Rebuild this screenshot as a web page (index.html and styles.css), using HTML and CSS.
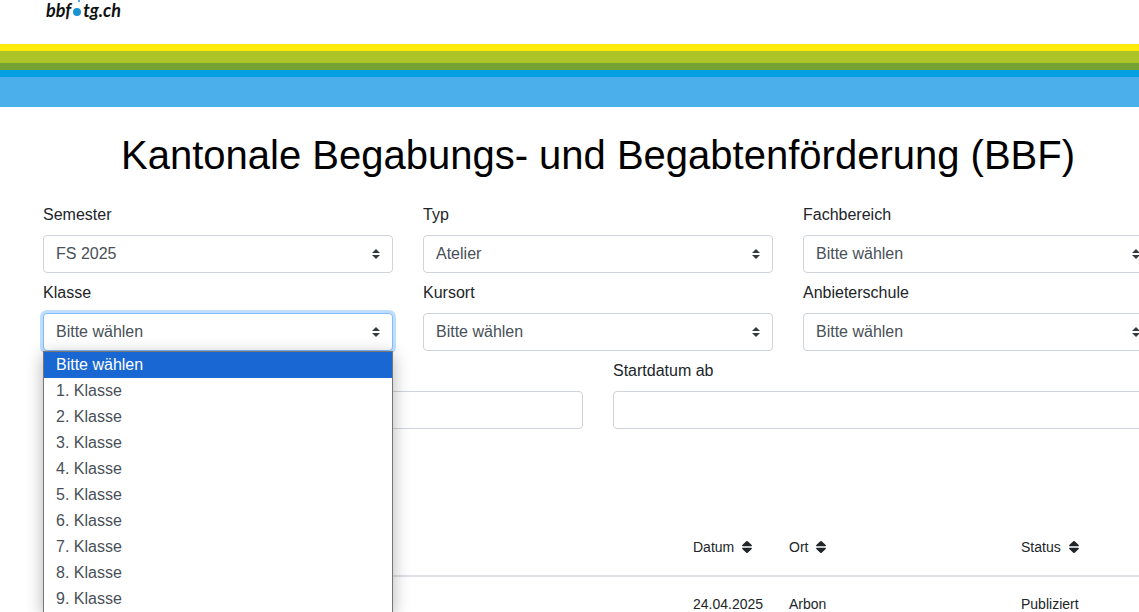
FILE: index.html
```html
<!DOCTYPE html>
<html lang="de">
<head>
<meta charset="utf-8">
<meta name="viewport" content="width=device-width, initial-scale=1">
<title>Kantonale Begabungs- und Begabtenförderung (BBF)</title>
<link rel="stylesheet" href="styles.css">
</head>
<body>
<header class="site-header">
  <a class="logo" href="#" aria-label="bbf tg.ch">
    <span>bbf</span>
    <svg class="logo-dot" viewBox="0 0 10 20" aria-hidden="true"><circle cx="5" cy="12" r="4"/><circle cx="7" cy="1" r="1"/></svg>
    <span>tg.ch</span>
  </a>
</header>
<div class="bands" aria-hidden="true">
  <div class="band band-yellow"></div>
  <div class="band band-lime"></div>
  <div class="band band-green"></div>
  <div class="band band-blue"></div>
  <div class="band band-sky"></div>
</div>
<main class="page">
  <h1 class="title">Kantonale Begabungs- und Begabtenförderung (BBF)</h1>
  <form class="filters">
    <div class="row row-three">
      <div class="field">
        <label for="semester">Semester</label>
        <select class="control select" id="semester"><option>FS 2025</option></select>
      </div>
      <div class="field">
        <label for="typ">Typ</label>
        <select class="control select" id="typ"><option>Atelier</option></select>
      </div>
      <div class="field">
        <label for="fachbereich">Fachbereich</label>
        <select class="control select" id="fachbereich"><option>Bitte wählen</option></select>
      </div>
      <div class="field">
        <label for="klasse">Klasse</label>
        <select class="control select is-open" id="klasse"><option>Bitte wählen</option></select>
        <ul class="menu" role="listbox" aria-label="Klasse">
          <li class="menu-item is-selected" role="option" aria-selected="true">Bitte wählen</li>
          <li class="menu-item" role="option">1. Klasse</li>
          <li class="menu-item" role="option">2. Klasse</li>
          <li class="menu-item" role="option">3. Klasse</li>
          <li class="menu-item" role="option">4. Klasse</li>
          <li class="menu-item" role="option">5. Klasse</li>
          <li class="menu-item" role="option">6. Klasse</li>
          <li class="menu-item" role="option">7. Klasse</li>
          <li class="menu-item" role="option">8. Klasse</li>
          <li class="menu-item" role="option">9. Klasse</li>
        </ul>
      </div>
      <div class="field">
        <label for="kursort">Kursort</label>
        <select class="control select" id="kursort"><option>Bitte wählen</option></select>
      </div>
      <div class="field">
        <label for="anbieter">Anbieterschule</label>
        <select class="control select" id="anbieter"><option>Bitte wählen</option></select>
      </div>
    </div>
    <div class="row row-two">
      <div class="field">
        <input class="control" type="text" aria-label="Suche">
      </div>
      <div class="field">
        <label for="start">Startdatum ab</label>
        <input class="control" id="start" type="text">
      </div>
    </div>
  </form>
  <table class="courses">
    <colgroup><col><col class="col-date"><col class="col-place"><col class="col-status"></colgroup>
    <thead>
      <tr>
        <td></td>
        <th scope="col"><button class="sort" type="button">Datum <svg class="sort-icon" viewBox="0 0 10 12" aria-hidden="true"><path d="M4.300.3Q5-.3 5.700.3L9.700 4Q10.200 5.300 9.200 5.300H.8Q-.2 5.300.3 4ZM4.300 11.700Q5 12.300 5.700 11.700L9.700 8Q10.200 6.700 9.200 6.700H.8Q-.2 6.700.3 8Z"/></svg></button></th>
        <th scope="col"><button class="sort" type="button">Ort <svg class="sort-icon" viewBox="0 0 10 12" aria-hidden="true"><path d="M4.300.3Q5-.3 5.700.3L9.700 4Q10.200 5.300 9.200 5.300H.8Q-.2 5.300.3 4ZM4.300 11.700Q5 12.300 5.700 11.700L9.700 8Q10.200 6.700 9.200 6.700H.8Q-.2 6.700.3 8Z"/></svg></button></th>
        <th scope="col"><button class="sort" type="button">Status <svg class="sort-icon" viewBox="0 0 10 12" aria-hidden="true"><path d="M4.300.3Q5-.3 5.700.3L9.700 4Q10.200 5.300 9.200 5.300H.8Q-.2 5.300.3 4ZM4.300 11.700Q5 12.300 5.700 11.700L9.700 8Q10.200 6.700 9.200 6.700H.8Q-.2 6.700.3 8Z"/></svg></button></th>
      </tr>
    </thead>
    <tbody>
      <tr><td></td><td>24.04.2025</td><td>Arbon</td><td>Publiziert</td></tr>
    </tbody>
  </table>
</main>
</body>
</html>
```

FILE: styles.css
```css
*, *::before, *::after { box-sizing: border-box; }

body {
  margin: 0;
  height: 100vh;
  overflow: hidden;
  background: #fff;
  color: #212529;
  font: 16px/24px "Liberation Sans", Arial, sans-serif;
}

.site-header { height: 44px; padding-left: 46px; }

.logo {
  display: inline-flex;
  gap: 1px;
  color: #111;
  font: italic 700 18px/20px Lato, sans-serif;
  text-decoration: none;
}
.logo-dot { width: 10px; height: 20px; fill: #1b93cf; }

.band-yellow { height: 7px; background: #ffeb0a; }
.band-lime { height: 12px; background: #adc428; }
.band-green { height: 7px; background: #74a333; }
.band-blue { height: 7px; background: #00a0e3; }
.band-sky { height: 30px; background: #4aafea; }

/* The content column runs slightly past the right window edge. */
.page { margin: 0 -14px 0 43px; padding-top: 24px; }

.title {
  margin: 0 0 24px;
  color: #000;
  font-size: 40px;
  font-weight: 400;
  line-height: 48px;
  text-align: center;
  white-space: nowrap;
}

.filters { display: grid; gap: 8px; }
.row { display: grid; gap: 8px 30px; }
.row-three { grid-template-columns: repeat(3, 1fr); }
.row-two { grid-template-columns: repeat(2, 1fr); }

.field {
  position: relative;
  display: flex;
  flex-direction: column;
  justify-content: flex-end;
  gap: 8px;
}

.control {
  width: 100%;
  height: 38px;
  padding: 6px 12px;
  border: 1px solid #ced4da;
  border-radius: 4px;
  background: #fff;
  color: #495057;
  font: inherit;
}
.select {
  appearance: none;
  background: #fff url("data:image/svg+xml,%3Csvg xmlns='http://www.w3.org/2000/svg' viewBox='0 0 4 5'%3E%3Cpath fill='%23343a40' d='M2 0L0 2h4zm0 5L0 3h4z'/%3E%3C/svg%3E") no-repeat right 12px center / 8px 10px;
}
.is-open { border-color: #80bdff; box-shadow: 0 0 0 3px #bfdeff; }

.menu {
  position: absolute;
  z-index: 1;
  top: 100%;
  left: 0;
  right: 0;
  margin: 0;
  padding: 0;
  border: 1px solid #767676;
  background: #fff;
  box-shadow: 0 4px 16px rgba(0, 0, 0, .3);
  color: #495057;
  list-style: none;
}
.menu-item { padding: 0 12px; line-height: 26px; }
.menu-item.is-selected { background: #1967d2; color: #fff; }

.courses {
  width: 100%;
  margin-top: 90px;
  border-collapse: collapse;
  table-layout: fixed;
  font-size: 14px;
  line-height: 20px;
}
.col-date { width: 96px; }
.col-place { width: 232px; }
.col-status { width: 144px; }
.courses th, .courses td { padding: 18px 12px; font-weight: 400; text-align: left; }
.courses tbody td { padding-top: 17px; }
.courses thead { border-bottom: 2px solid #dee2e6; }

.sort {
  display: flex;
  align-items: center;
  gap: 8px;
  padding: 0;
  border: 0;
  background: none;
  color: inherit;
  font: inherit;
}
.sort-icon { width: 10px; height: 12px; fill: #212529; }
```
